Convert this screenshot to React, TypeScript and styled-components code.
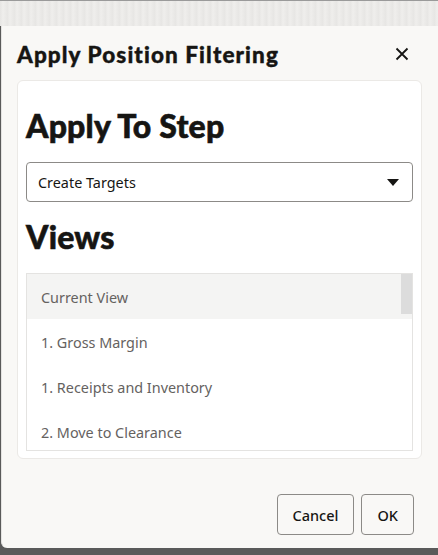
import React, { useState, type FC } from "react";
import styled, { createGlobalStyle } from "styled-components";

const GlobalStyle = createGlobalStyle`
  html, body {
    margin: 0;
    padding: 0;
    background: #5a5a5a;
  }
  * {
    box-sizing: border-box;
  }
`;

const views = [
  "Current View",
  "1. Gross Margin",
  "1. Receipts and Inventory",
  "2. Move to Clearance",
];

const App: FC = () => {
  const [step] = useState("Create Targets");
  const [selected, setSelected] = useState(0);

  return (
    <>
      <GlobalStyle />
      <Page>
        <Backdrop />
        <Dialog>
          <Header>
            <Title>Apply Position Filtering</Title>
            <CloseButton aria-label="Close">
              <svg width="14" height="14" viewBox="0 0 14 14">
                <path
                  d="M1.5 1.5 L12.5 12.5 M12.5 1.5 L1.5 12.5"
                  stroke="#161513"
                  strokeWidth="1.8"
                  fill="none"
                />
              </svg>
            </CloseButton>
          </Header>
          <Card>
            <SectionTitle>Apply To Step</SectionTitle>
            <Select>
              <span>{step}</span>
              <svg width="12" height="7" viewBox="0 0 12 7">
                <path d="M0 0 L12 0 L6 7 Z" fill="#161513" />
              </svg>
            </Select>
            <SectionTitle>Views</SectionTitle>
            <List>
              {views.map((view, i) => (
                <Row
                  key={view}
                  active={i === selected}
                  onClick={() => setSelected(i)}
                >
                  {view}
                </Row>
              ))}
              <Scrollbar />
            </List>
          </Card>
          <Footer>
            <Button>Cancel</Button>
            <Button>OK</Button>
          </Footer>
        </Dialog>
      </Page>
    </>
  );
};

export default App;

const Page = styled.div`
  width: 438px;
  height: 555px;
  display: flex;
  flex-direction: column;
  overflow: hidden;
  background: #5a5a5a;
`;

const Backdrop = styled.div`
  height: 26px;
  flex-shrink: 0;
  background: repeating-linear-gradient(
      90deg,
      #e6e5e3 0px,
      #efeeec 3px,
      #e8e7e5 7px
    ),
    #ebeae8;
  border-top: 1px solid #9a9a9a;
`;

const Dialog = styled.div`
  height: 522px;
  margin-left: 1px;
  margin-right: -6px;
  display: flex;
  flex-direction: column;
  background: #f9f8f6;
  border-radius: 0 0 6px 6px;
  border-left: 1px solid #e4e3e1;
  font-family: "Noto Sans", "Open Sans", sans-serif;
  color: #161513;
`;

const Header = styled.div`
  height: 54px;
  display: flex;
  align-items: center;
  justify-content: space-between;
  padding: 2px 30px 0 15px;
`;

const Title = styled.h1`
  margin: 0;
  font-family: Lato, "Noto Sans", sans-serif;
  font-size: 22.5px;
  font-weight: 900;
  letter-spacing: 1.1px;
  -webkit-text-stroke: 0.4px #161513;
`;

const CloseButton = styled.button`
  display: flex;
  align-items: center;
  justify-content: center;
  width: 24px;
  height: 24px;
  padding: 0;
  border: none;
  background: none;
  cursor: pointer;
`;

const Card = styled.div`
  width: 405px;
  height: 379px;
  margin-left: 15px;
  padding: 25px 8px 0 8px;
  display: flex;
  flex-direction: column;
  background: #ffffff;
  border: 1px solid #ebe9e6;
  border-radius: 6px;
  overflow: hidden;
`;

const SectionTitle = styled.h2`
  margin: 0;
  height: 56px;
  line-height: 40px;
  font-family: Lato, "Noto Sans", sans-serif;
  font-size: 32px;
  font-weight: 900;
  letter-spacing: 0.2px;
  -webkit-text-stroke: 0.6px #161513;
`;

const Select = styled.div`
  height: 40px;
  margin-bottom: 15px;
  padding: 0 13px 0 11px;
  display: flex;
  align-items: center;
  justify-content: space-between;
  border: 1px solid #8c8a87;
  border-radius: 4px;
  font-size: 14.4px;
  color: #161513;
  background: #fff;
`;

const List = styled.div`
  position: relative;
  height: 178px;
  border: 1px solid #e4e3e1;
  overflow: hidden;
`;

const Row = styled.div<{ active: boolean }>`
  height: 45px;
  padding: 1px 10px 0 14px;
  display: flex;
  align-items: center;
  font-size: 14.4px;
  color: #65625f;
  background: ${({ active }) => (active ? "#f4f4f3" : "#ffffff")};
  cursor: pointer;
`;

const Scrollbar = styled.div`
  position: absolute;
  top: 0;
  right: 0;
  width: 11px;
  height: 40px;
  background: #dcdcdc;
`;

const Footer = styled.div`
  flex: 1;
  display: flex;
  justify-content: flex-end;
  align-items: flex-start;
  gap: 7px;
  padding: 35px 30px 0 0;
`;

const Button = styled.button`
  height: 41px;
  padding: 0 15px;
  min-width: 52px;
  border: 1px solid #8c8a87;
  border-radius: 4px;
  background: #f9f8f6;
  font-family: "Noto Sans", "Open Sans", sans-serif;
  font-size: 14.5px;
  font-weight: 500;
  color: #161513;
  cursor: pointer;
`;
